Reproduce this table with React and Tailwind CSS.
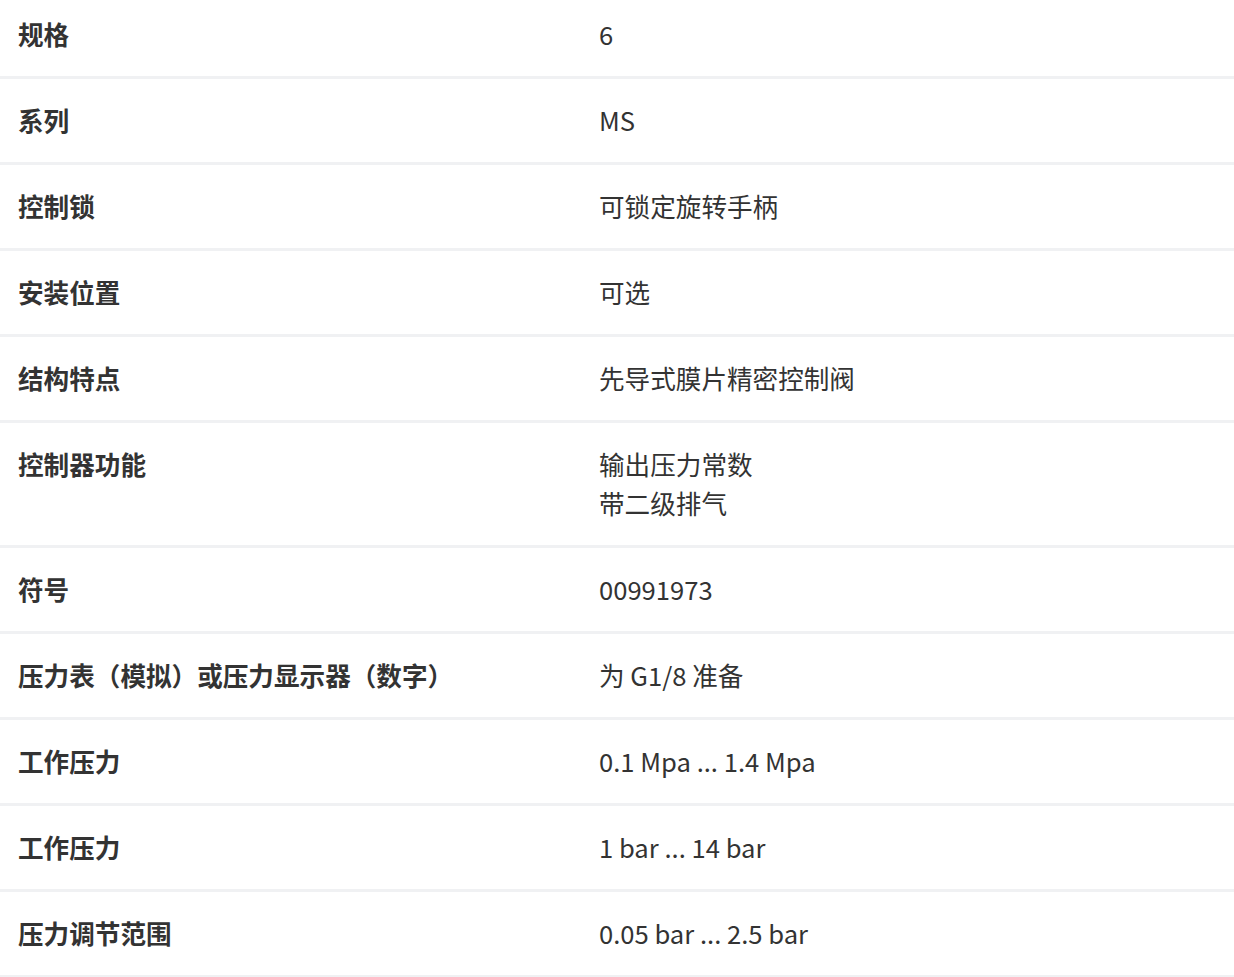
import React from "react";

const rows = [
  { label: "规格", value: ["6"] },
  { label: "系列", value: ["MS"] },
  { label: "控制锁", value: ["可锁定旋转手柄"] },
  { label: "安装位置", value: ["可选"] },
  { label: "结构特点", value: ["先导式膜片精密控制阀"] },
  { label: "控制器功能", value: ["输出压力常数", "带二级排气"] },
  { label: "符号", value: ["00991973"] },
  { label: "压力表（模拟）或压力显示器（数字）", value: ["为 G1/8 准备"] },
  { label: "工作压力", value: ["0.1 Mpa ... 1.4 Mpa"] },
  { label: "工作压力", value: ["1 bar ... 14 bar"] },
  { label: "压力调节范围", value: ["0.05 bar ... 2.5 bar"] },
];

const App = () => {
  return (
    <div
      className="w-[1234px] h-[977px] overflow-hidden bg-white text-[#333333]"
      style={{ fontFamily: '"Noto Sans CJK SC", "Noto Sans", sans-serif' }}
    >
      <div className="mt-[-7px]">
        {rows.map((row, i) => (
          <div
            key={i}
            className="flex border-b-[3px] border-[#f0f1f3] pt-[21px] pb-[23px] text-[25.6px] leading-[39px]"
          >
            <div className="w-[599px] shrink-0 pl-[18px] font-bold">
              {row.label}
            </div>
            <div className="flex-1">
              {row.value.map((v, j) => (
                <div key={j}>{v}</div>
              ))}
            </div>
          </div>
        ))}
      </div>
    </div>
  );
};

export default App;
